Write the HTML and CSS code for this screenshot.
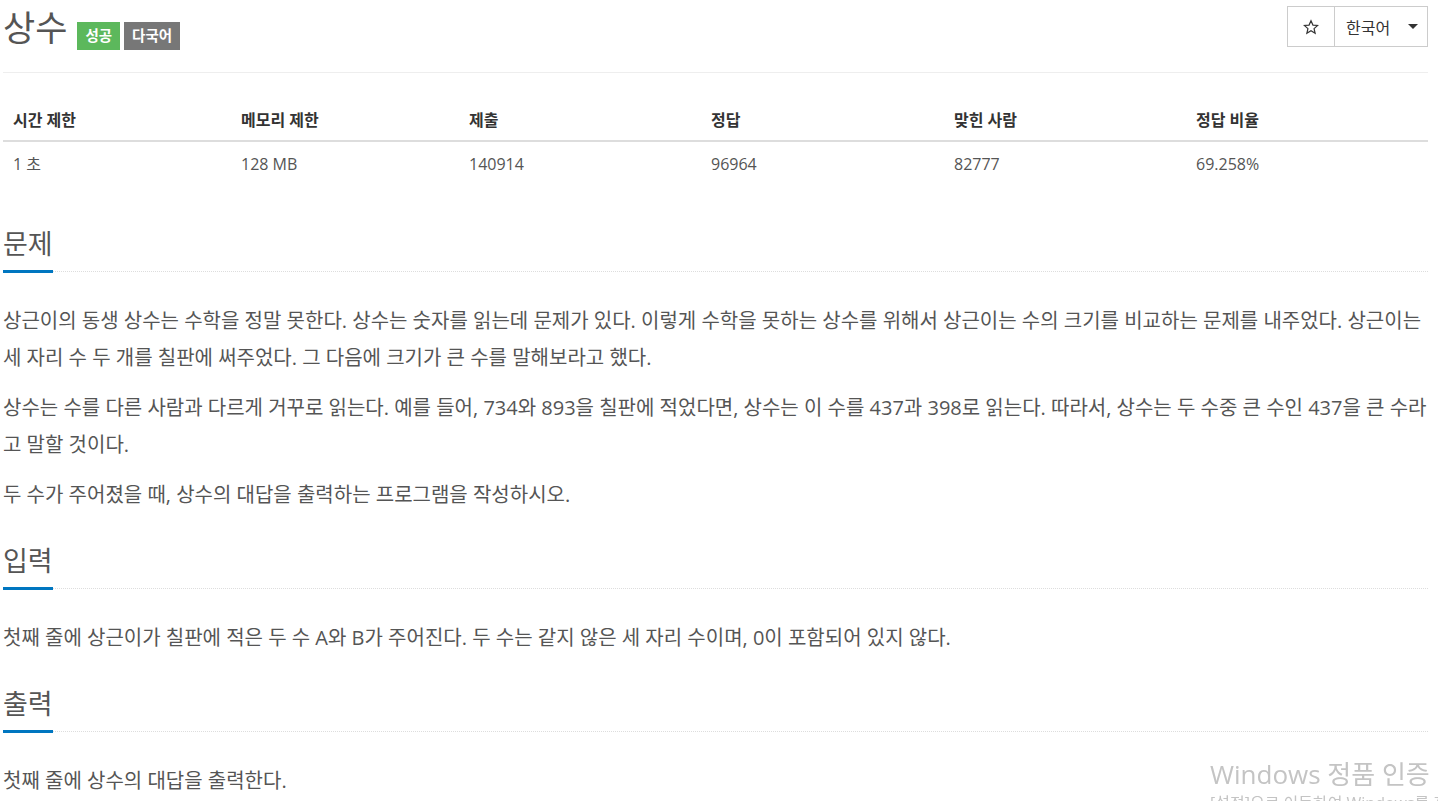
FILE: index.html
```html
<!DOCTYPE html>
<html lang="ko">
<head>
<meta charset="utf-8">
<title>상수</title>
<link rel="stylesheet" href="styles.css">
</head>
<body>
<div class="page">
  <div class="page-header">
    <div class="title-block">
      <h1 class="title">상수</h1>
      <span class="label label-success">성공</span>
      <span class="label label-default">다국어</span>
    </div>
    <div class="btn-group">
      <button class="btn btn-star" type="button">
        <svg width="16" height="16" viewBox="0 0 24 24"><path d="M12 2.5l2.9 6.6 7.1.6-5.4 4.7 1.6 7-6.2-3.7-6.2 3.7 1.6-7L2 9.7l7.1-.6z" fill="none" stroke="#333" stroke-width="1.8" stroke-linejoin="miter"/></svg>
      </button>
      <button class="btn btn-lang" type="button">한국어 <span class="caret"></span></button>
    </div>
  </div>

  <table class="info-table">
    <thead>
      <tr><th>시간 제한</th><th>메모리 제한</th><th>제출</th><th>정답</th><th>맞힌 사람</th><th>정답 비율</th></tr>
    </thead>
    <tbody>
      <tr><td>1 초</td><td>128 MB</td><td>140914</td><td>96964</td><td>82777</td><td>69.258%</td></tr>
    </tbody>
  </table>

  <section class="problem-section first">
    <div class="headline"><h2>문제</h2></div>
    <div class="problem-text">
      <p>상근이의 동생 상수는 수학을 정말 못한다. 상수는 숫자를 읽는데 문제가 있다. 이렇게 수학을 못하는 상수를 위해서 상근이는 수의 크기를 비교하는 문제를 내주었다. 상근이는 세 자리 수 두 개를 칠판에 써주었다. 그 다음에 크기가 큰 수를 말해보라고 했다.</p>
      <p>상수는 수를 다른 사람과 다르게 거꾸로 읽는다. 예를 들어, 734와 893을 칠판에 적었다면, 상수는 이 수를 437과 398로 읽는다. 따라서, 상수는 두 수중 큰 수인 437을 큰 수라고 말할 것이다.</p>
      <p>두 수가 주어졌을 때, 상수의 대답을 출력하는 프로그램을 작성하시오.</p>
    </div>
  </section>

  <section class="problem-section">
    <div class="headline"><h2>입력</h2></div>
    <div class="problem-text">
      <p>첫째 줄에 상근이가 칠판에 적은 두 수 A와 B가 주어진다. 두 수는 같지 않은 세 자리 수이며, 0이 포함되어 있지 않다.</p>
    </div>
  </section>

  <section class="problem-section">
    <div class="headline"><h2>출력</h2></div>
    <div class="problem-text">
      <p>첫째 줄에 상수의 대답을 출력한다.</p>
    </div>
  </section>
</div>

<div class="watermark">
  <div class="wm-title">Windows 정품 인증</div>
  <div class="wm-sub">[설정]으로 이동하여 Windows를 정품 인증합니다.</div>
</div>
</body>
</html>
```

FILE: styles.css
```css
html, body {
  margin: 0;
  padding: 0;
  background: #fff;
}

body {
  font-family: "Open Sans", "Noto Sans CJK KR", sans-serif;
  color: #555;
  font-size: 16px;
  overflow: hidden;
}

.page {
  padding: 0 10px 0 3px;
}

.page-header {
  display: flex;
  justify-content: space-between;
  align-items: flex-start;
  height: 73px;
  box-sizing: border-box;
  border-bottom: 1px solid #eee;
}

.title-block {
  display: flex;
  align-items: flex-start;
}

.title {
  margin: 8px 0 0 0;
  font-size: 35px;
  line-height: 40px;
  font-weight: 400;
  color: #555;
}

.label {
  display: inline-block;
  margin-top: 22px;
  height: 28px;
  line-height: 28px;
  padding: 0 8px;
  font-size: 14.5px;
  font-weight: 700;
  color: #fff;
}

.label-success {
  margin-left: 10px;
  background: #5cb85c;
}

.label-default {
  margin-left: 4px;
  background: #777;
}

.btn-group {
  display: flex;
  margin-top: 6px;
}

.btn {
  height: 41px;
  background: #fff;
  border: 1px solid #ccc;
  font-family: "Open Sans", "Noto Sans CJK KR", sans-serif;
  font-size: 16px;
  color: #333;
  padding: 0;
  display: flex;
  align-items: center;
  justify-content: center;
}

.btn-star {
  width: 48px;
}

.btn-lang {
  width: 94px;
  margin-left: -1px;
  justify-content: flex-start;
  padding-left: 11px;
}

.caret {
  display: inline-block;
  width: 0;
  height: 0;
  margin-left: 18px;
  border-top: 5px solid #333;
  border-left: 5px solid transparent;
  border-right: 5px solid transparent;
}

.info-table {
  width: 100%;
  margin-top: 27px;
  border-collapse: collapse;
  border-spacing: 0;
  table-layout: fixed;
  font-size: 16px;
}

.info-table th,
.info-table td {
  text-align: left;
  line-height: 20px;
  padding-left: 10px;
  padding-right: 10px;
}

.info-table th {
  padding-top: 10px;
  padding-bottom: 10px;
  font-weight: 700;
  color: #333;
  border-bottom: 2px solid #ddd;
}

.info-table td {
  padding-top: 12px;
  padding-bottom: 12px;
  color: #555;
}

.info-table th:nth-child(1) { width: 208px; }
.info-table th:nth-child(2) { width: 208px; }
.info-table th:nth-child(3) { width: 222px; }
.info-table th:nth-child(4) { width: 223px; }
.info-table th:nth-child(5) { width: 222px; }

.problem-section {
  margin-top: 33px;
}

.problem-section.first {
  margin-top: 43px;
}

.headline {
  border-bottom: 1px dotted #ddd;
  margin-bottom: 30px;
}

.headline h2 {
  display: inline-block;
  margin: 0 0 -2px 0;
  font-size: 27px;
  line-height: 30px;
  font-weight: 400;
  color: #555;
  padding-bottom: 11px;
  border-bottom: 3px solid #0076c0;
}

.problem-text {
  font-size: 20px;
  line-height: 37px;
  color: #555;
}

.problem-text p {
  margin: 0 0 13px 0;
}

.watermark {
  position: fixed;
  left: 1210px;
  top: 756px;
  color: #c4c4c4;
  white-space: nowrap;
  font-family: "Open Sans", "Noto Sans CJK KR", sans-serif;
}

.wm-title {
  font-size: 26px;
  line-height: 36px;
}

.wm-sub {
  font-size: 16px;
  line-height: 22px;
}
```
